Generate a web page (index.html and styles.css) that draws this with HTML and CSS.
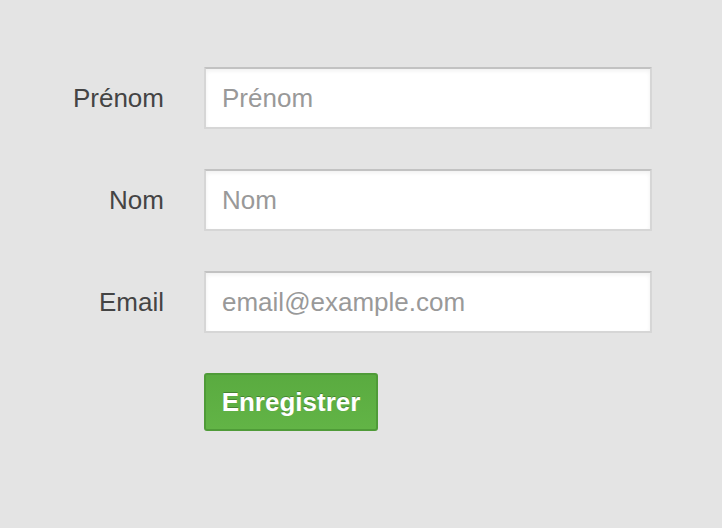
FILE: index.html
```html
<!DOCTYPE html>
<html lang="fr">
<head>
<meta charset="utf-8">
<link rel="stylesheet" href="styles.css">
</head>
<body>
<form class="form">
  <div class="row">
    <label class="label" for="prenom">Prénom</label>
    <input class="input" id="prenom" type="text" placeholder="Prénom">
  </div>
  <div class="row">
    <label class="label" for="nom">Nom</label>
    <input class="input" id="nom" type="text" placeholder="Nom">
  </div>
  <div class="row">
    <label class="label" for="email">Email</label>
    <input class="input" id="email" type="email" placeholder="email@example.com">
  </div>
  <div class="row">
    <span></span>
    <div><button class="btn" type="button">Enregistrer</button></div>
  </div>
</form>
</body>
</html>
```
FILE: styles.css
```css
html, body {
  margin: 0;
  padding: 0;
  background: #e4e4e4;
  height: 100%;
}
body {
  font-family: "Liberation Sans", Arial, sans-serif;
}
.form {
  padding-top: 67px;
  display: flex;
  flex-direction: column;
  gap: 40px;
}
.row {
  display: grid;
  grid-template-columns: 164px 448px;
  column-gap: 40px;
  align-items: center;
}
.label {
  text-align: right;
  font-size: 26px;
  color: #444;
}
.input {
  box-sizing: border-box;
  width: 448px;
  height: 62px;
  margin: 0;
  padding: 0 16px;
  font-family: "Liberation Sans", Arial, sans-serif;
  font-size: 26px;
  color: #444;
  background: #fff;
  border: 2px solid #d6d6d6;
  border-top-color: #c2c2c2;
  border-radius: 1px;
  box-shadow: inset 0 2px 4px rgba(0,0,0,0.06);
  outline: none;
}
.input::placeholder {
  color: #999;
}
.btn {
  box-sizing: border-box;
  height: 58px;
  width: 174px;
  margin: 0;
  padding: 0;
  font-family: "Liberation Sans", Arial, sans-serif;
  font-size: 26px;
  font-weight: bold;
  color: #fff;
  text-shadow: 0 -1px 0 rgba(0,0,0,0.25);
  background: linear-gradient(#5aab40, #62b446);
  border: 2px solid #4f9b38;
  border-radius: 3px;
}
```
